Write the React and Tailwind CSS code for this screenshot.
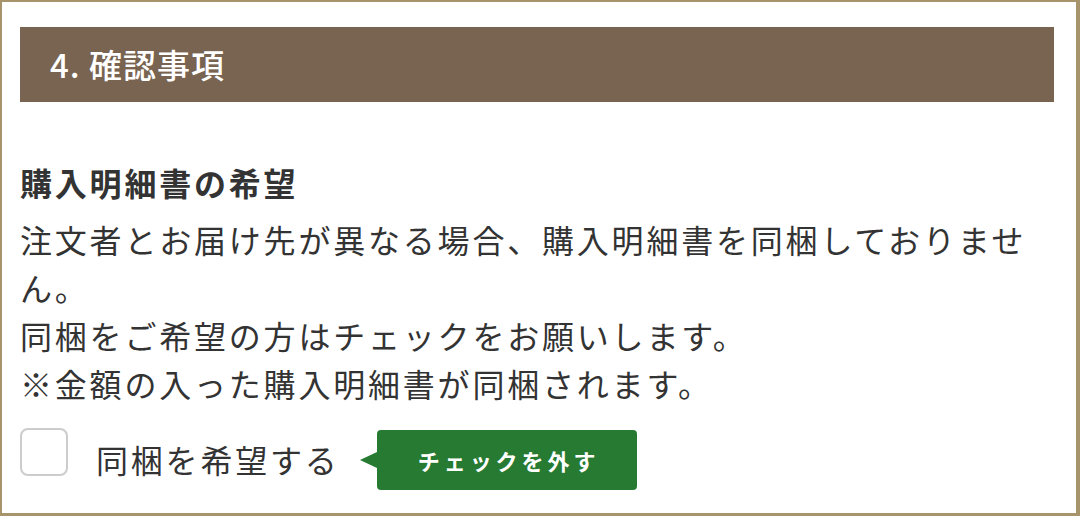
import React from 'react';

const jp = { fontFamily: '"Noto Sans CJK JP", "Noto Sans", sans-serif' };

export default function App() {
  return (
    <div
      style={jp}
      className="w-[1080px] h-[516px] overflow-hidden bg-white border-[#a8946a] border-l-2 border-t-2 border-r-4 border-b-[3px] pl-[18px] pr-[22px] pt-[25px] text-[#333333]"
    >
      <div className="h-[75px] bg-[#786451] flex items-center pl-[30px] text-white text-[33px] tracking-[0.03em] font-medium">
        4. 確認事項
      </div>

      <div className="mt-[56px]">
        <h3 className="text-[32px] leading-[48px] font-bold tracking-[2.8px] mb-[9px]">購入明細書の希望</h3>
        <p className="text-[32px] leading-[48px] tracking-[2.8px]">
          注文者とお届け先が異なる場合、購入明細書を同梱しておりません。
          <br />
          同梱をご希望の方はチェックをお願いします。
          <br />
          ※金額の入った購入明細書が同梱されます。
        </p>

        <div className="mt-[21px] flex items-center">
          <label className="flex items-center cursor-pointer">
            <span className="w-[48px] h-[48px] rounded-[8px] border-2 border-[#cccccc] bg-white -mt-[14px]"></span>
            <span className="ml-[28px] text-[32px] leading-[48px] tracking-[2.8px]">同梱を希望する</span>
          </label>
          <div className="relative ml-[37px] mt-[2px]">
            <span className="absolute -left-[17px] top-1/2 -translate-y-1/2 w-0 h-0 border-y-[8px] border-y-transparent border-r-[17px] border-r-[#267a31]"></span>
            <button className="w-[260px] h-[60px] rounded-[4px] bg-[#267a31] text-white text-[22px] font-bold tracking-[0.18em] pl-[4px]">
              チェックを外す
            </button>
          </div>
        </div>
      </div>
    </div>
  );
}
